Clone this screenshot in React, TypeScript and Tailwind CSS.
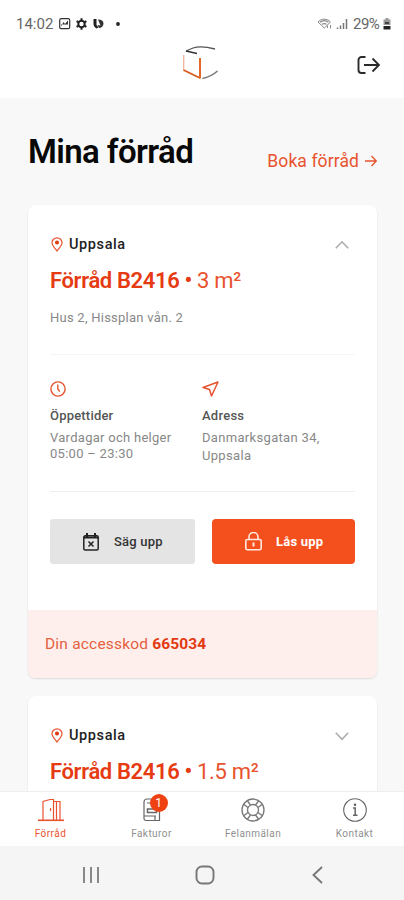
import React from 'react';

type StorageCardProps = {
  name: string;
  size: string;
  open?: boolean;
  children?: React.ReactNode;
};

const PinIcon = () => (
  <svg className="w-3 h-[15px]" viewBox="0 0 12 15" fill="none">
    <path d="M6 14C4.6 11.8 1 8.9 1 5.8a5 5 0 0 1 10 0C11 8.9 7.4 11.8 6 14Z" stroke="#e8532f" strokeWidth="1.2" />
    <circle cx="6" cy="5.6" r="2" fill="#e03a10" />
  </svg>
);

const Chevron = ({ open }: { open?: boolean }) => (
  <svg className="w-4 h-4" viewBox="0 0 16 16" fill="none" stroke="#acacac" strokeWidth="1.6">
    <path d={open ? 'M1.8 11.3 8 4.8l6.2 6.5' : 'M1.8 4.8 8 11.3l6.2-6.5'} />
  </svg>
);

const StorageCard = ({ name, size, open, children }: StorageCardProps) => (
  <div className="w-[349px] rounded-[8px] bg-white shadow-[0_1px_2px_rgba(0,0,0,0.12)] overflow-hidden">
    <div className="px-[22px] pt-[29px]">
      <div className="flex items-center h-5">
        <div className="pl-px">
          <PinIcon />
        </div>
        <div className="flex-grow pl-[6px] pt-px text-[14.5px] leading-5 font-medium tracking-[0.6px] text-[#222]">Uppsala</div>
        <div className="pr-[5px] pt-[2px]">
          <Chevron open={open} />
        </div>
      </div>
      <div className="mt-[12px] flex items-center h-7 text-[22px] whitespace-pre text-[#e63a12]">
        <span className="font-semibold tracking-[-0.35px]">{name}</span>
        <span className="font-semibold tracking-[-0.4px]"> • </span>
        <span className="tracking-[-0.3px] text-[#e8522d]">{size}</span>
      </div>
    </div>
    {children}
  </div>
);

const StatusBar = () => (
  <div className="flex items-center h-9 pt-3 pl-4 pr-[13px] text-[#666]">
    <span className="w-[37px] text-[15px]">14:02</span>
    <svg className="w-[62px] h-3 ml-[6px]" viewBox="0 0 62 12">
      <rect x="0.7" y="0.7" width="10" height="10" rx="1.5" fill="none" stroke="#333" strokeWidth="1.2" />
      <path d="M2 8.5 4.5 4l1.5 2 3-3.5v4H2Z" fill="#333" />
      <circle cx="22.5" cy="6" r="3.2" fill="none" stroke="#222" strokeWidth="2" />
      <path d="M22.5 0.3v3M22.5 8.7v3M17.6 3.2l2.5 1.4M24.9 7.4l2.5 1.4M17.6 8.8l2.5-1.4M24.9 4.6l2.5-1.4" stroke="#222" strokeWidth="2" />
      <path d="M34.5 1h3v6l2 2.5-2 1c-2-1-3-3-3-5Z" fill="#222" />
      <path d="M39 1.5c3.5 0 5.5 1.5 5.5 4s-2 4.5-4.5 4.5l-1.5-3 3 .5Z" fill="#333" />
      <circle cx="59" cy="6" r="1.9" fill="#222" />
    </svg>
    <svg className="w-[31px] h-3 ml-auto" viewBox="0 0 31 12" fill="none" stroke="#888">
      <path d="M1 4C4 .3 10.5.3 13.5 4L7.3 10Z" />
      <path d="M3 4.3c2.5-2 6-2 8.5 0M5 6.3c1.5-1 3-1 4.5 0" strokeWidth="1.3" />
      <path d="M10.5 10V7.5M13.5 7v3.5" />
      <path d="M20.5 11V9.5M23.5 11V7.5M26.5 11V5M29.5 11V1" stroke="#777" strokeWidth="1.5" />
    </svg>
    <span className="ml-[5px] w-[29px] text-[15px] tracking-[-0.5px]">29%</span>
    <svg className="w-2 h-3 ml-px" viewBox="0 0 8 12">
      <path d="M2.5 0h3v1.5h2V7h-7V1.5h2Z" fill="#999" />
      <path d="M2 4h4v2H2Z" fill="#444" />
      <path d="M.5 8h7v3.5h-7Z" fill="#222" />
    </svg>
  </div>
);

const Header = () => (
  <div className="flex justify-between h-[62px] pl-[181px] pr-6">
    <svg className="w-[38px] h-[38px] mt-[8px]" viewBox="0 0 38 38" fill="none">
      <path d="M5 7 12 4C19 1.8 26 3 34 5" stroke="#555" strokeWidth="1.3" />
      <path d="M5 7 16 9.5" stroke="#333" strokeWidth="1.6" />
      <path d="M2.7 11v15" stroke="#f0b49a" strokeWidth="1.3" />
      <path d="M2.5 26 19 34" stroke="#d9591c" strokeWidth="1.8" />
      <path d="M19 14v20.5" stroke="#e4672a" strokeWidth="2" />
      <path d="M21.5 34.5C27 33.500 32 31 36.500 27" stroke="#777" strokeWidth="1.5" />
    </svg>
    <svg className="w-6 h-5 mt-[19px]" viewBox="0 0 24 20" fill="none" stroke="#2b2b2b" strokeWidth="1.9">
      <path d="M9.5 2h-4a3 3 0 0 0-3 3v10a3 3 0 0 0 3 3h4M8 10h15M16.5 3.5 23 10l-6.5 6.5" />
    </svg>
  </div>
);

const StorageDetails = () => (
  <>
    <div className="px-[22px]">
      <div className="mt-[12px] h-6 text-[13px] leading-6 tracking-[0.25px] text-[#888]">Hus 2, Hissplan vån. 2</div>
      <div className="mt-6 h-[138px] border-y border-t-[#f5f5f5] border-b-[#efefef] flex pt-[26px]">
        <div className="w-[152px]">
          <svg className="w-4 h-4" viewBox="0 0 16 16" fill="none" stroke="#e8532f" strokeWidth="1.4">
            <circle cx="8" cy="8" r="7.1" />
            <path d="M7.8 3.5V8l2 2.5" />
          </svg>
          <div className="mt-[9px] text-[13px] leading-5 font-medium tracking-[0.2px] text-[#555]">Öppettider</div>
          <div className="mt-[4px] text-[13px] leading-4 tracking-[0.28px] text-[#888] whitespace-nowrap">
            Vardagar och helger
            <br />
            05:00 – 23:30
          </div>
        </div>
        <div>
          <svg className="w-[17px] h-4" viewBox="0 0 17 16" fill="none" stroke="#e8532f" strokeWidth="1.5" strokeLinejoin="round">
            <path d="M1 6.5 16 1 9.5 15l-2-6.5Z" />
          </svg>
          <div className="mt-[9px] text-[13px] leading-5 font-medium tracking-[0.25px] text-[#555]">Adress</div>
          <div className="mt-[3px] text-[13px] leading-[17.5px] tracking-[0.32px] text-[#888] whitespace-nowrap">
            Danmarksgatan 34,
            <br />
            Uppsala
          </div>
        </div>
      </div>
      <div className="mt-[27px] flex justify-between">
        <button className="w-[145px] h-[45px] rounded-[3px] bg-[#e4e4e4] flex items-center pl-[33px] text-[#333]">
          <svg className="w-4 h-[18px]" viewBox="0 0 16 18" fill="none" stroke="#222" strokeWidth="1.5">
            <rect x="0.8" y="2.8" width="14.4" height="14.2" rx="1.5" />
            <path d="M.8 4.500h14.4M4 0v4M12 0v4" strokeWidth="2" />
            <path d="m5.5 8.5 5 5M10.5 8.5l-5 5" />
          </svg>
          <span className="pl-[15px] pt-px text-[13px] font-medium tracking-[0.2px]">Säg upp</span>
        </button>
        <button className="w-[143px] h-[45px] rounded-[4px] bg-[#f4501e] flex items-center pl-[33px] text-white">
          <svg className="w-[17px] h-[19px]" viewBox="0 0 17 19" fill="none" stroke="#ffe9e2" strokeWidth="1.6">
            <rect x="0.8" y="7.5" width="15.4" height="10.2" rx="1.5" />
            <path d="M4 7.5V5a4.5 4.5 0 0 1 9 0v2.5" />
            <path d="M8.5 10.5v4" strokeWidth="2" />
          </svg>
          <span className="pl-[14px] pt-px text-[13px] font-bold tracking-[0.2px]">Lås upp</span>
        </button>
      </div>
    </div>
    <div className="mt-[46px] h-[68px] pl-[17px] pt-[2px] bg-[#feefec] flex items-center text-[15.5px] whitespace-pre text-[#e4603f]">
      <span className="tracking-[0.2px]">Din accesskod </span>
      <span className="font-bold tracking-[0.1px] text-[#e23a12]">665034</span>
    </div>
  </>
);

const TabBar = () => (
  <div className="h-[55px] shrink-0 border-t border-[#eee] bg-white grid grid-cols-4 pt-[6px] text-center text-[10px] leading-3 tracking-[0.45px] text-[#8f8f8f]">
    <div className="flex flex-col items-center text-[#e8532f]">
      <svg className="w-7 h-6" viewBox="0 0 28 24" fill="none" stroke="#e8532f" strokeWidth="1.2">
        <path d="M1 22.3h26" strokeWidth="1.6" />
        <path d="M6 22V3.5l7-2h3.500V22M16.5 3.5H23V22M19.5 3.5V22M13.5 10v3" />
      </svg>
      <span className="mt-[6px]">Förråd</span>
    </div>
    <div className="flex flex-col items-center">
      <div className="relative">
        <svg className="w-[18px] h-6" viewBox="0 0 18 24" fill="none" stroke="#666" strokeWidth="1.2">
          <path d="M1 4a3 3 0 0 1 3-3h12.5v21.5H3a2 2 0 0 1-2-2Z" />
          <path d="M1 18h12M12 22v-4M4 5h4" />
          <rect x="4.5" y="11" width="9" height="3.5" strokeWidth="1.5" />
        </svg>
        <span className="absolute left-[7px] -top-[4px] w-[18px] h-[18px] rounded-full bg-[#ee4213] text-[12px] leading-[19px] tracking-normal text-white">1</span>
      </div>
      <span className="mt-[6px]">Fakturor</span>
    </div>
    <div className="flex flex-col items-center pl-px">
      <svg className="w-6 h-6" viewBox="0 0 24 24" fill="none" stroke="#777" strokeWidth="1.3">
        <circle cx="12" cy="12" r="11" />
        <circle cx="12" cy="12" r="5.5" />
        <path d="M6.500 3 9.500 7M3 6.500 7 9.500M17.500 3 14.500 7M21 6.500 17 9.500M6.500 21 9.500 17M3 17.500 7 14.500M17.500 21 14.500 17M21 17.500 17 14.500" />
      </svg>
      <span className="mt-[6px]">Felanmälan</span>
    </div>
    <div className="flex flex-col items-center pl-[2px]">
      <svg className="w-6 h-6" viewBox="0 0 24 24" fill="none" stroke="#666" strokeWidth="1.1">
        <circle cx="12" cy="12" r="11.3" />
        <path d="M10 10h2.2v7M10 17.3h4.5" strokeWidth="1.5" />
        <circle cx="12" cy="6.8" r="1.2" fill="#555" stroke="none" />
      </svg>
      <span className="mt-[6px]">Kontakt</span>
    </div>
  </div>
);

const SystemNav = () => (
  <div className="h-[54px] shrink-0 bg-[#f5f5f5] flex items-center pl-[82px]">
    <svg className="w-[18px] h-[18px] mt-[3px]" viewBox="0 0 18 18" stroke="#888" strokeWidth="2">
      <path d="M2 1v16M9 1v16M16 1v16" />
    </svg>
    <svg className="w-[20px] h-[20px] mt-[3px] ml-[95px]" viewBox="0 0 20 20" fill="none" stroke="#777" strokeWidth="1.9">
      <rect x="1.5" y="1.5" width="17" height="17" rx="5.5" />
    </svg>
    <svg className="w-[11px] h-[18px] mt-[3px] ml-[97px]" viewBox="0 0 11 18" fill="none" stroke="#777" strokeWidth="1.9">
      <path d="M10 1 1.5 9l8.5 8" />
    </svg>
  </div>
);

const App: React.FC = () => {
  return (
    <div className="w-[404px] h-[900px] overflow-hidden flex flex-col bg-[#f8f8f8] font-[Roboto,sans-serif]">
      <div className="h-[98px] shrink-0 bg-white">
        <StatusBar />
        <Header />
      </div>
      <div className="flex-grow min-h-0 overflow-hidden pl-7">
        <div className="flex justify-between items-end h-[107px] pr-[27px] pb-[32px]">
          <h1 className="text-[33px] leading-[42px] font-semibold tracking-[-0.6px] text-[#080808]">Mina förråd</h1>
          <div className="flex items-center text-[17.5px] leading-6 tracking-[0.1px] text-[#e8532f]">
            Boka förråd
            <svg className="w-3 h-3 ml-[6px]" viewBox="0 0 12 12" fill="none" stroke="#e8532f" strokeWidth="1.4">
              <path d="M0 6h11M6.5 1l4.8 5-4.8 5" />
            </svg>
          </div>
        </div>
        <div className="flex flex-col gap-[18px]">
          <StorageCard name="Förråd B2416" size="3 m²" open>
            <StorageDetails />
          </StorageCard>
          <StorageCard name="Förråd B2416" size="1.5 m²">
            <div className="h-10" />
          </StorageCard>
        </div>
      </div>
      <TabBar />
      <SystemNav />
    </div>
  );
};

export default App;
